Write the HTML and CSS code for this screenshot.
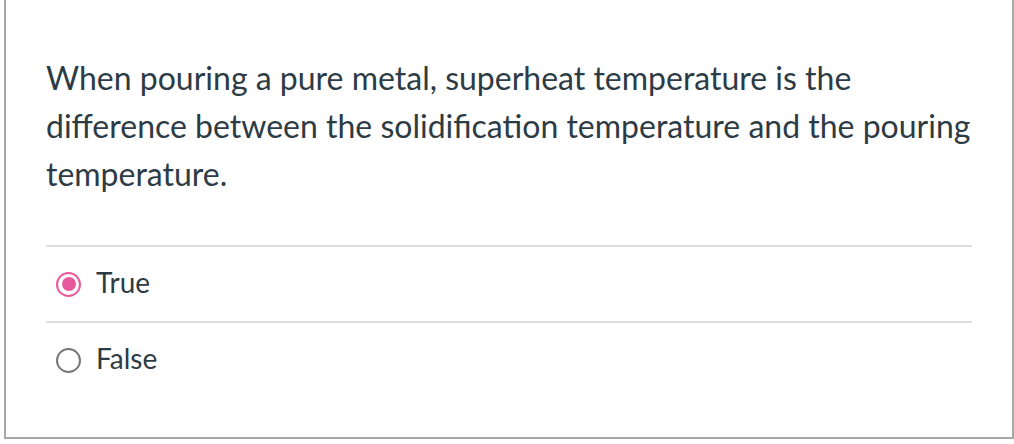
FILE: index.html
```html
<!DOCTYPE html>
<html>
<head>
<meta charset="utf-8">
<link rel="stylesheet" href="styles.css">
</head>
<body>
<div class="question">
  <div class="question-text">When pouring a pure metal, superheat temperature is the difference between the solidification temperature and the pouring temperature.</div>
  <div class="answers">
    <label class="answer">
      <span class="radio checked"><span class="dot"></span></span>
      <span class="answer-label">True</span>
    </label>
    <label class="answer">
      <span class="radio"></span>
      <span class="answer-label">False</span>
    </label>
  </div>
</div>
</body>
</html>
```
FILE: styles.css
```css
html, body {
  margin: 0;
  padding: 0;
  background: #ffffff;
}
body {
  font-family: Lato, "Liberation Sans", sans-serif;
  color: #2d3b45;
}
.question {
  margin-left: 4px;
  width: 1010px;
  height: 439px;
  border: 2px solid #a8a8a8;
  border-top: none;
  padding: 54px 26px 0 40px;
  box-sizing: border-box;
}
.question-text {
  font-size: 32px;
  line-height: 48px;
}
.answers {
  margin-top: 47px;
  width: 926px;
}
.answer {
  display: flex;
  align-items: center;
  height: 74px;
  border-top: 2px solid #dddddd;
  padding-left: 10px;
  gap: 15px;
}
.radio {
  width: 21px;
  height: 21px;
  border: 2px solid #777777;
  border-radius: 50%;
  display: flex;
  align-items: center;
  justify-content: center;
  box-sizing: content-box;
  flex: none;
}
.radio.checked {
  border-color: #e8599c;
}
.dot {
  width: 14px;
  height: 14px;
  border-radius: 50%;
  background: #e8599c;
}
.answer-label {
  font-size: 28px;
  line-height: 30px;
  padding-bottom: 4px;
}
```
